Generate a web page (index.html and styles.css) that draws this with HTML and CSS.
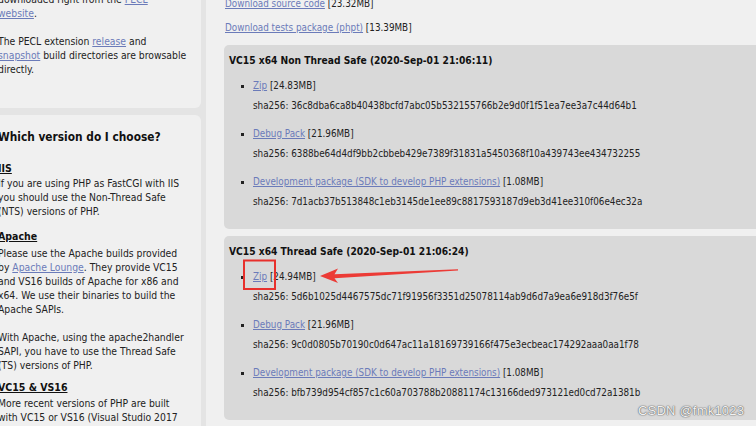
FILE: index.html
```html
<!DOCTYPE html>
<html>
<head>
<meta charset="utf-8">
<link rel="stylesheet" href="styles.css">
</head>
<body>
<div class="page">
  <aside class="sidebar">
    <section class="panel panel-top">
      <p>downloaded right from the <a href="#">PECL</a><br><a href="#">website</a>.</p>
      <p>The PECL extension <a href="#">release</a> and<br><a href="#">snapshot</a> build directories are browsable<br>directly.</p>
    </section>
    <section class="panel panel-main">
      <h3>Which version do I choose?</h3>
      <h4 class="h-iis">IIS</h4>
      <p class="p-iis">If you are using PHP as FastCGI with IIS<br>you should use the Non-Thread Safe<br>(NTS) versions of PHP.</p>
      <h4 class="h-apache">Apache</h4>
      <p class="p-apache">Please use the Apache builds provided<br>by <a href="#">Apache Lounge</a>. They provide VC15<br>and VS16 builds of Apache for x86 and<br>x64. We use their binaries to build the<br>Apache SAPIs.</p>
      <p class="p-with">With Apache, using the apache2handler<br>SAPI, you have to use the Thread Safe<br>(TS) versions of PHP.</p>
      <h4 class="h-vc">VC15 &amp; VS16</h4>
      <p class="p-vc">More recent versions of PHP are built<br>with VC15 or VS16 (Visual Studio 2017<br>or 2019 compiler respectively) and</p>
    </section>
  </aside>
  <main class="main">
    <p class="dl"><a href="#">Download source code</a> [23.32MB]</p>
    <p class="dl"><a href="#">Download tests package (phpt)</a> [13.39MB]</p>

    <section class="build">
      <h4>VC15 x64 Non Thread Safe (2020-Sep-01 21:06:11)</h4>
      <ul>
        <li><a href="#">Zip</a> [24.83MB]<p class="sha">sha256: 36c8dba6ca8b40438bcfd7abc05b532155766b2e9d0f1f51ea7ee3a7c44d64b1</p></li>
        <li><a href="#">Debug Pack</a> [21.96MB]<p class="sha">sha256: 6388be64d4df9bb2cbbeb429e7389f31831a5450368f10a439743ee434732255</p></li>
        <li><a href="#">Development package (SDK to develop PHP extensions)</a> [1.08MB]<p class="sha">sha256: 7d1acb37b513848c1eb3145de1ee89c8817593187d9eb3d41ee310f06e4ec32a</p></li>
      </ul>
    </section>

    <section class="build">
      <h4>VC15 x64 Thread Safe (2020-Sep-01 21:06:24)</h4>
      <ul>
        <li><a href="#">Zip</a> [24.94MB]<p class="sha">sha256: 5d6b1025d4467575dc71f91956f3351d25078114ab9d6d7a9ea6e918d3f76e5f</p></li>
        <li><a href="#">Debug Pack</a> [21.96MB]<p class="sha">sha256: 9c0d0805b70190c0d647ac11a18169739166f475e3ecbeac174292aaa0aa1f78</p></li>
        <li><a href="#">Development package (SDK to develop PHP extensions)</a> [1.08MB]<p class="sha">sha256: bfb739d954cf857c1c60a703788b20881174c13166ded973121ed0cd72a1381b</p></li>
      </ul>
    </section>

    <section class="build build-next">
      <h4>VC15 x86 Non Thread Safe (2020-Sep-01 21:06:16)</h4>
    </section>
  </main>
</div>

<svg class="annot" width="756" height="426" viewBox="0 0 756 426" xmlns="http://www.w3.org/2000/svg">
  <rect x="244" y="260.5" width="31" height="28.5" fill="none" stroke="#e8302c" stroke-width="2"/>
  <polygon points="320,276 338,268.5 334.5,274.3 458,269.2 458,270.6 334.5,278.2 338,283" fill="#ec3b36"/>
</svg>

<div class="watermark">CSDN @fmk1023</div>
</body>
</html>
```

FILE: styles.css
```css
html, body {
  margin: 0;
  padding: 0;
}

body {
  width: 756px;
  height: 426px;
  overflow: hidden;
  position: relative;
  background: #e4e4e4;
  font-family: "DejaVu Sans", "Liberation Sans", sans-serif;
  font-stretch: condensed;
  font-size: 9.8px;
  line-height: 14px;
  color: #222;
}

a {
  color: #6b7bb9;
  text-decoration: underline;
}

p, h3, h4, ul {
  margin: 0;
  padding: 0;
}

.page {
  display: flex;
  align-items: flex-start;
  margin-top: -20px;
  margin-left: -12px;
  width: 820px;
}

.sidebar {
  width: 213px;
  flex: none;
  display: flex;
  flex-direction: column;
  gap: 7px;
  font-size: 10.3px;
}

.panel {
  background: #f0f0f0;
  border-radius: 6px;
  padding-left: 10px;
}

.panel-top {
  padding-top: 12px;
  padding-bottom: 18px;
  border-top-left-radius: 0;
  border-top-right-radius: 0;
}

.panel-top p {
  margin-bottom: 14px;
}

.panel-top p + p {
  margin-top: 1px;
}

.panel-main {
  padding-top: 14px;
  height: 400px;
}

.panel h3 {
  font-size: 11.8px;
  line-height: 16px;
  font-weight: bold;
  color: #111;
}

.panel h4 {
  font-size: 10.5px;
  font-weight: bold;
  color: #111;
  text-decoration: underline;
  line-height: 14px;
}

.h-iis { margin-top: 16px; }
.p-iis { margin-top: 1px; }
.h-apache { margin-top: 11px; }
.p-apache { margin-top: 3px; }
.p-with { margin-top: 14px; }
.h-vc { margin-top: 8px; }
.p-vc { margin-top: 2px; }

.main {
  flex: 1;
  margin-left: 5px;
  background: #f0f0f0;
  padding: 17px 0 0 18px;
  height: 460px;
}

.dl {
  margin-left: 1px;
  margin-bottom: 10px;
}

.build {
  background: #d9d9d9;
  border-radius: 5px;
  padding: 8px 0 20px 5px;
  margin-bottom: 7px;
}

.build h4 {
  font-size: 10.2px;
  font-weight: bold;
  color: #111;
  line-height: 14px;
  padding-top: 1px;
  margin-bottom: -1px;
}

.build ul {
  list-style: none;
  margin-top: 12px;
}

.build li {
  position: relative;
  padding-left: 24px;
  margin-top: 14px;
}

.build li:first-child {
  margin-top: 0;
}

.build li::before {
  content: "";
  position: absolute;
  left: 12px;
  top: 6px;
  width: 3px;
  height: 3px;
  background: #222;
}

.sha {
  margin-top: 6px;
}

.annot {
  position: absolute;
  left: 0;
  top: 0;
  pointer-events: none;
}

.watermark {
  position: absolute;
  left: 638px;
  top: 403px;
  font-family: "Liberation Sans", Arial, sans-serif;
  font-stretch: normal;
  font-size: 13px;
  line-height: 16px;
  color: #f2f2f2;
  text-shadow: 0 0 1px #555, 0 0 1px #777, 0 0 2px #999;
  letter-spacing: 0.2px;
}
```
